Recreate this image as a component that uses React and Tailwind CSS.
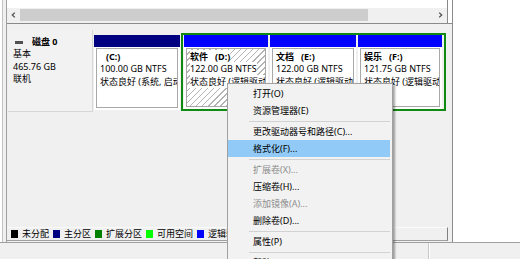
import React from "react";

function Part({ w, h, header, hatched, lines }) {
  return (
    <div className={`${w} ${h} bg-white flex flex-col shrink-0`}>
      <div className={`h-[12px] shrink-0 ${header}`} />
      <div className="flex-1 pt-[1px] px-[2px] pb-[2px] flex min-h-0">
        <div
          className={
            hatched
              ? "flex-1 border border-[#a8a8a8] pl-[3px] pt-[2px] leading-[12.3px] overflow-hidden whitespace-nowrap bg-[image:repeating-linear-gradient(135deg,#ffffff_0px,#ffffff_3.2px,#b4b4b4_3.2px,#b4b4b4_4.3px)]"
              : "flex-1 border border-[#a8a8a8] pl-[3px] pt-[2px] leading-[12.3px] overflow-hidden whitespace-nowrap"
          }
        >
          {lines}
        </div>
      </div>
    </div>
  );
}

function Line({ children, bold }) {
  return (
    <div className="h-[12.3px]">
      <span className={bold ? "bg-white font-bold" : "bg-white"}>{children}</span>
    </div>
  );
}

const menu = [
  { t: "打开(O)" },
  { t: "资源管理器(E)" },
  "sep",
  { t: "更改驱动器号和路径(C)..." },
  { t: "格式化(F)...", hi: true },
  "sep",
  { t: "扩展卷(X)...", dis: true },
  { t: "压缩卷(H)..." },
  { t: "添加镜像(A)...", dis: true },
  { t: "删除卷(D)..." },
  "sep",
  { t: "属性(P)" },
  "sep",
  { t: "帮助(H)" },
];

export default function App() {
  return (
    <div className="w-[520px] h-[259px] overflow-hidden bg-white relative flex flex-col text-[9px] text-black font-['Noto_Sans','Noto_Sans_CJK_SC',sans-serif]">
      <div className="flex h-[242px] shrink-0">
        <div className="w-[2px] bg-white" />
        <div className="w-[1px] bg-[#c4c4c4]" />
        <div className="w-[3px] bg-[#f0f0f0]" />
        <div className="w-[1px] bg-[#a0a0a0]" />
        {/* window content x 7..452 */}
        <div className="w-[445px] flex flex-col bg-[#f0f0f0]">
          {/* upper pane */}
          <div className="h-[24px] flex border-b border-[#8a8a8a] shrink-0">
            <div className="w-[441px] flex flex-col border-r border-[#8a8a8a]">
              <div className="h-[8px] bg-white" />
              <div className="h-[14px] flex items-center bg-[#f0f0f0]">
                <div className="w-[13px] h-[14px] flex items-center justify-center">
                  <svg width="5" height="6" viewBox="0 0 5 6">
                    <polyline points="3.8,0.6 1.3,3 3.8,5.4" fill="none" stroke="#505050" strokeWidth="1.3" />
                  </svg>
                </div>
                <div className="w-[348px] h-[12px] bg-[#cdcdcd]" />
                <div className="flex-1" />
                <div className="w-[13px] h-[14px] flex items-center justify-center">
                  <svg width="5" height="6" viewBox="0 0 5 6">
                    <polyline points="1.2,0.6 3.7,3 1.2,5.4" fill="none" stroke="#505050" strokeWidth="1.3" />
                  </svg>
                </div>
              </div>
              <div className="h-[1px] bg-[#f0f0f0]" />
            </div>
            <div className="flex-1 bg-white" />
          </div>

          {/* lower pane */}
          <div className="flex-1 flex flex-col pt-[6px]">
            <div className="flex items-start pl-[1px]">
              {/* disk label */}
              <div className="w-[85px] h-[82px] shrink-0 bg-[#f2f2f2] border-r border-b border-[#d6d6d6] pl-[5px] pt-[6px] leading-[12.4px]">
                <div className="flex items-center h-[12.4px] font-bold">
                  <span className="w-[8px] h-[3px] bg-[#505050] ml-[2px] mr-[9px]" />
                  磁盘 0
                </div>
                <div>基本</div>
                <div>465.76 GB</div>
                <div>联机</div>
              </div>
              {/* C */}
              <div className="ml-[1px] mt-[5px]">
                <Part
                  w="w-[86px]"
                  h="h-[75px]"
                  header="bg-[#000080]"
                  lines={
                    <>
                      <div className="h-[12.3px] pl-[6px] font-bold">(C:)</div>
                      <Line>100.00 GB NTFS</Line>
                      <Line>状态良好 (系统, 启动, 页面文件, 故障转储, 主分区)</Line>
                    </>
                  }
                />
              </div>
              {/* extended */}
              <div className="ml-[1px] mt-[3px] w-[265px] h-[78px] border-2 border-[#108a10] flex pl-[1px] gap-[2px]">
                <Part
                  w="w-[84px]"
                  h="h-[74px]"
                  header="bg-[#0000ff]"
                  hatched
                  lines={
                    <>
                      <div className="h-[12.3px] font-bold">
                        <span className="bg-white">软件</span>
                        <span className="bg-white pl-[7px]">(D:)</span>
                      </div>
                      <Line>122.00 GB NTFS</Line>
                      <Line>状态良好 (逻辑驱动器)</Line>
                    </>
                  }
                />
                <Part
                  w="w-[86px]"
                  h="h-[74px]"
                  header="bg-[#0000ff]"
                  lines={
                    <>
                      <div className="h-[12.3px] font-bold">
                        文档<span className="pl-[7px]">(E:)</span>
                      </div>
                      <Line>122.00 GB NTFS</Line>
                      <Line>状态良好 (逻辑驱动器)</Line>
                    </>
                  }
                />
                <Part
                  w="w-[84px]"
                  h="h-[74px]"
                  header="bg-[#0000ff]"
                  lines={
                    <>
                      <div className="h-[12.3px] font-bold">
                        娱乐<span className="pl-[7px]">(F:)</span>
                      </div>
                      <Line>121.75 GB NTFS</Line>
                      <Line>状态良好 (逻辑驱动器)</Line>
                    </>
                  }
                />
              </div>
            </div>
            <div className="flex-1" />
            {/* legend */}
            <div className="h-[14px] w-[441px] shrink-0 border-t border-t-[#fafafa] border-r border-r-[#808080] border-b border-b-[#a0a0a0] flex items-center pl-[4px] gap-[4px] whitespace-nowrap overflow-hidden leading-[12px]">
              <span className="w-[7px] h-[8px] shrink-0 bg-black" />
              <span>未分配</span>
              <span className="w-[7px] h-[8px] shrink-0 bg-[#000080]" />
              <span>主分区</span>
              <span className="w-[7px] h-[8px] shrink-0 bg-[#008000]" />
              <span>扩展分区</span>
              <span className="w-[7px] h-[8px] shrink-0 bg-[#00ff00]" />
              <span>可用空间</span>
              <span className="w-[7px] h-[8px] shrink-0 bg-[#0000ff]" />
              <span>逻辑驱动器</span>
            </div>
            <div className="h-[1px] bg-[#f0f0f0]" />
          </div>
        </div>
        <div className="w-[1px] bg-[#8c8c8c]" />
        <div className="flex-1 bg-white" />
      </div>

      {/* status bar */}
      <div className="h-[17px] shrink-0 bg-[#f0f0f0] border-t border-[#a0a0a0] flex">
        <div className="w-[428px]" />
        <div className="w-[1px] bg-[#c8c8c8]" />
        <div className="w-[1px] bg-white" />
        <div className="flex-1" />
      </div>

      {/* context menu */}
      <div className="absolute left-[227px] top-[83px] w-[166px] h-[190px] bg-[#f2f2f2] border border-[#a0a0a0] shadow-[2px_2px_2px_rgba(0,0,0,0.35)] pt-[1px] flex flex-col">
        {menu.map((m, i) =>
          m === "sep" ? (
            <div key={i} className="h-[4px] shrink-0 flex items-center">
              <div className="ml-[21px] mr-[2px] flex-1 h-[1px] bg-[#d2d2d2]" />
            </div>
          ) : (
            <div
              key={i}
              className={
                m.hi
                  ? "h-[17px] shrink-0 leading-[17px] pl-[25px] mr-[2px] bg-[#91c9f7] whitespace-nowrap"
                  : m.dis
                  ? "h-[17px] shrink-0 leading-[17px] pl-[25px] mr-[2px] text-[#8d8d8d] whitespace-nowrap"
                  : "h-[17px] shrink-0 leading-[17px] pl-[25px] mr-[2px] whitespace-nowrap"
              }
            >
              {m.t}
            </div>
          )
        )}
      </div>
    </div>
  );
}
